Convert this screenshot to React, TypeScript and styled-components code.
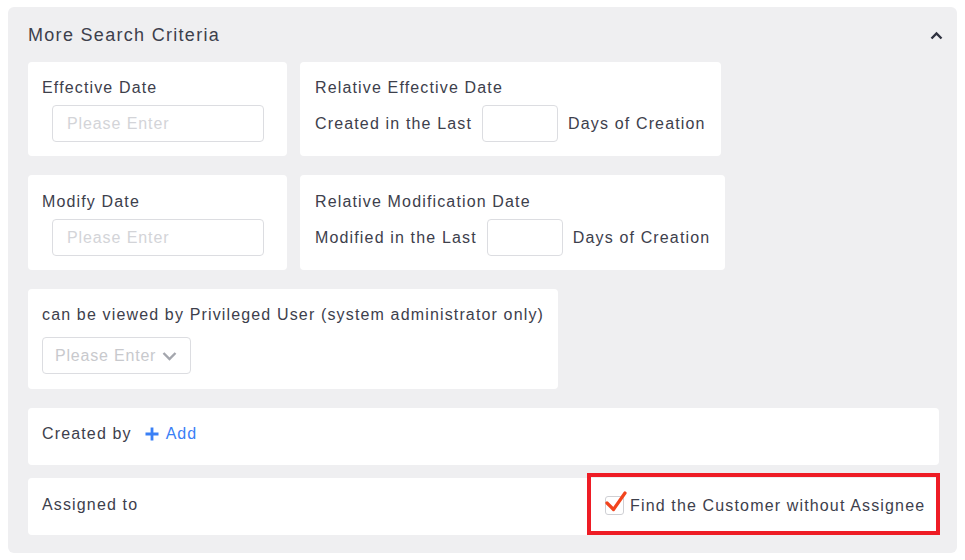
import styled, { createGlobalStyle } from "styled-components";

const GlobalStyle = createGlobalStyle`
  html, body {
    margin: 0;
    padding: 0;
    background: #ffffff;
  }
  body {
    font-family: "Liberation Sans", Arial, sans-serif;
    color: #3d404c;
  }
  * { box-sizing: border-box; }
`;

const Page = styled.div`
  padding: 7px 8px 7px 8px;
`;

const Panel = styled.section`
  background: #efeff1;
  border-radius: 6px;
  padding: 0 18px 18px 20px;
`;

const Header = styled.div`
  display: flex;
  align-items: center;
  justify-content: space-between;
  height: 55px;
`;

const Title = styled.h2`
  margin: 0;
  font-size: 18px;
  font-weight: 400;
  letter-spacing: 1.3px;
  color: #3d404c;
  padding-top: 1px;
`;

const Collapse = styled.button`
  border: none;
  background: none;
  padding: 0;
  width: 16px;
  height: 16px;
  display: flex;
  align-items: center;
  justify-content: center;
  margin-right: -5px;
  margin-top: 2px;
  cursor: pointer;
`;

const Rows = styled.div`
  display: flex;
  flex-direction: column;
`;

const CardRow = styled.div<{ $gap?: number }>`
  display: flex;
  gap: 13px;
  margin-bottom: ${(p) => p.$gap ?? 19}px;
`;

const Card = styled.div<{ $width?: number; $height: number; $top?: number; $side?: number }>`
  background: #ffffff;
  border-radius: 4px;
  padding: ${(p) => p.$top ?? 17}px ${(p) => p.$side ?? 14}px 0;
  width: ${(p) => (p.$width ? `${p.$width}px` : "auto")};
  height: ${(p) => p.$height}px;
  display: flex;
  flex-direction: column;
  gap: 8px;
`;

const Label = styled.div`
  font-size: 16px;
  letter-spacing: 1.15px;
  line-height: 18px;
  white-space: nowrap;
`;

const TextInput = styled.input<{ $width: number; $indent?: number }>`
  width: ${(p) => p.$width}px;
  height: 37px;
  margin-left: ${(p) => p.$indent ?? 0}px;
  border: 1px solid #dcdde1;
  border-radius: 4px;
  background: #fff;
  padding: 0 14px;
  font-family: "Liberation Sans", Arial, sans-serif;
  font-size: 16px;
  letter-spacing: 0.9px;
  color: #3d404c;
  outline: none;
  &::placeholder {
    color: #d3d4d8;
  }
`;

const InlineRow = styled.div`
  display: flex;
  align-items: center;
  gap: 10px;
`;

const SelectBox = styled.div`
  width: 149px;
  height: 37px;
  border: 1px solid #dcdde1;
  border-radius: 4px;
  display: flex;
  align-items: center;
  padding: 0 6px 0 12px;
  gap: 6px;
  margin-top: 5px;
`;

const SelectPlaceholder = styled.span`
  font-size: 16px;
  letter-spacing: 0.8px;
  color: #c8c9cd;
  white-space: nowrap;
`;

const WideCard = styled.div<{ $gap?: number; $top?: number }>`
  position: relative;
  background: #ffffff;
  border-radius: 4px;
  height: 57px;
  padding: ${(p) => p.$top ?? 17}px 0 0 14px;
  display: flex;
  align-items: flex-start;
  justify-content: space-between;
  margin-bottom: ${(p) => p.$gap ?? 0}px;
`;

const Left = styled.div`
  display: flex;
  align-items: center;
  gap: 13px;
  line-height: 20px;
`;

const AddLink = styled.a`
  display: flex;
  align-items: center;
  gap: 7px;
  color: #3a80f6;
  font-size: 16px;
  letter-spacing: 0.9px;
  text-decoration: none;
  cursor: pointer;
`;

const Highlight = styled.label`
  position: absolute;
  right: -1px;
  top: -5px;
  bottom: 0;
  width: 353px;
  border: 4px solid #ee1c25;
  display: flex;
  align-items: center;
  gap: 6px;
  padding-left: 14px;
  padding-top: 3px;
  font-size: 16px;
  letter-spacing: 1.15px;
  color: #3d404c;
  white-space: nowrap;
`;

const CheckBox = styled.span`
  position: relative;
  width: 19px;
  height: 19px;
  border: 1px solid #cfd0d4;
  border-radius: 3px;
  background: #fff;
  flex: none;
`;

const CheckMark = styled.svg`
  position: absolute;
  left: -1px;
  top: -7px;
`;

export default function App() {
  return (
    <>
      <GlobalStyle />
      <Page>
        <Panel>
          <Header>
            <Title>More Search Criteria</Title>
            <Collapse aria-label="collapse">
              <svg width="13" height="9" viewBox="0 0 13 9">
                <path d="M1.5 7.5 L6.5 2.5 L11.5 7.5" fill="none" stroke="#2f3240" strokeWidth="2.4" />
              </svg>
            </Collapse>
          </Header>
          <Rows>
            <CardRow>
              <Card $width={259} $height={94}>
                <Label>Effective Date</Label>
                <TextInput $width={212} $indent={10} placeholder="Please Enter" />
              </Card>
              <Card $height={94} $side={15}>
                <Label>Relative Effective Date</Label>
                <InlineRow>
                  <Label>Created in the Last</Label>
                  <TextInput $width={76} />
                  <Label>Days of Creation</Label>
                </InlineRow>
              </Card>
            </CardRow>
            <CardRow>
              <Card $width={259} $height={95} $top={18}>
                <Label>Modify Date</Label>
                <TextInput $width={212} $indent={10} placeholder="Please Enter" />
              </Card>
              <Card $height={95} $top={18} $side={15}>
                <Label>Relative Modification Date</Label>
                <InlineRow>
                  <Label>Modified in the Last</Label>
                  <TextInput $width={76} />
                  <Label>Days of Creation</Label>
                </InlineRow>
              </Card>
            </CardRow>
            <CardRow>
              <Card $height={100}>
                <Label>can be viewed by Privileged User (system administrator only)</Label>
                <SelectBox>
                  <SelectPlaceholder>Please Enter</SelectPlaceholder>
                  <svg width="15" height="10" viewBox="0 0 15 10">
                    <path d="M1.5 2 L7.5 8 L13.5 2" fill="none" stroke="#a4a6ad" strokeWidth="2.4" />
                  </svg>
                </SelectBox>
              </Card>
            </CardRow>
            <WideCard $gap={13} $top={16}>
              <Left>
                <Label>Created by</Label>
                <AddLink>
                  <svg width="14" height="14" viewBox="0 0 14 14">
                    <path d="M7 0.5 V13.5 M0.5 7 H13.5" stroke="#3a80f6" strokeWidth="2.8" />
                  </svg>
                  Add
                </AddLink>
              </Left>
            </WideCard>
            <WideCard $top={18}>
              <Left>
                <Label>Assigned to</Label>
              </Left>
              <Highlight>
                <CheckBox>
                  <CheckMark width="22" height="22" viewBox="0 0 22 22">
                    <path d="M2 13 L8.5 19.5 L20 3" fill="none" stroke="#f2441d" strokeWidth="3.2" strokeLinecap="round" strokeLinejoin="round" />
                  </CheckMark>
                </CheckBox>
                Find the Customer without Assignee
              </Highlight>
            </WideCard>
          </Rows>
        </Panel>
      </Page>
    </>
  );
}
